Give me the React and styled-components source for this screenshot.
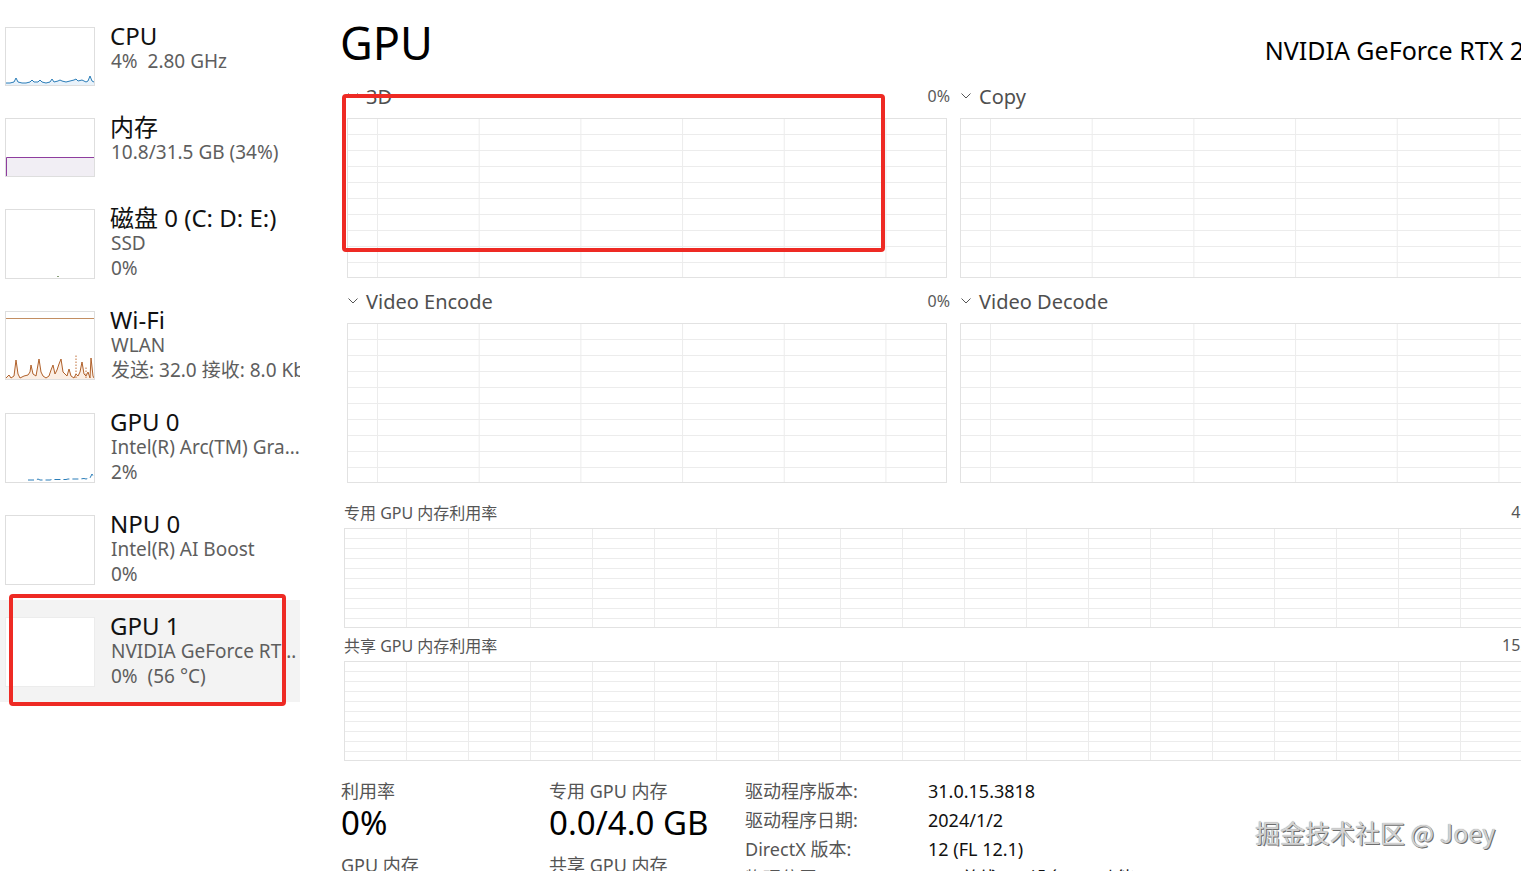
import React from "react";
import styled, { createGlobalStyle } from "styled-components";

const GlobalStyle = createGlobalStyle`
  html, body { margin: 0; padding: 0; background: #fff; overflow: hidden; }
  body { font-family: "Noto Sans", "Noto Sans CJK SC", sans-serif; color: #111; }
  * { box-sizing: border-box; }
`;

const Page = styled.div`
  position: relative;
  display: flex;
  width: 1521px;
  height: 871px;
  overflow: hidden;
  background: #fff;
`;

/* ---------- Sidebar ---------- */
const Sidebar = styled.nav`
  flex: 0 0 300px;
  width: 300px;
  min-width: 0;
  overflow: hidden;
  display: flex;
  flex-direction: column;
  padding-top: 10px;
`;

const Item = styled.div`
  display: flex;
  align-items: flex-start;
  width: 300px;
  padding: 12px 0 13px 5px;
  background: ${(p) => (p.$selected ? "#f3f3f3" : "transparent")};
`;

const Thumb = styled.div`
  flex: 0 0 90px;
  height: ${(p) => p.$h}px;
  margin: 5px 0 2px;
  border: 1px solid ${(p) => (p.$selected ? "#ececec" : "#dedede")};
  background: #fff;
  overflow: hidden;
  svg { display: block; width: 100%; height: 100%; }
`;

const ItemText = styled.div`
  flex: 1;
  min-width: 0;
  margin-left: 15px;
  overflow: hidden;
`;

const ItemTitle = styled.div`
  font-size: 24px;
  line-height: 27px;
  color: #111;
  white-space: nowrap;
`;

const ItemSub = styled.div`
  font-size: 19px;
  line-height: 25px;
  color: #5e5e5e;
  white-space: nowrap;
  overflow: hidden;
  text-overflow: ${(p) => (p.$clip ? "clip" : "ellipsis")};
  padding-left: 1px;
`;

/* ---------- Main ---------- */
const Main = styled.main`
  flex: 0 0 1267px;
  min-width: 1267px;
  padding: 20px 0 0 40px;
`;

const Header = styled.header`
  display: flex;
  align-items: baseline;
  justify-content: space-between;
`;

const Title = styled.h1`
  margin: 0;
  font-size: 45px;
  line-height: 45px;
  font-weight: 400;
  color: #000;
`;

const DeviceName = styled.div`
  font-size: 25px;
  line-height: 30px;
  color: #000;
  white-space: nowrap;
`;

const EngineGrid = styled.section`
  display: grid;
  grid-template-columns: 600px 600px;
  column-gap: 13px;
  row-gap: 5px;
  margin: 13px 0 0 7px;
`;

const EngineCell = styled.div`
  display: flex;
  flex-direction: column;
`;

const EngineHead = styled.div`
  display: flex;
  align-items: center;
  height: 36px;
  margin-bottom: 4px;
`;

const ChevronIcon = styled.svg`
  width: 10px;
  height: 6px;
  margin: 0 8px 0 1px;
  flex: none;
`;

const EngineName = styled.span`
  font-size: 20px;
  color: #4f4f4f;
`;

const EnginePct = styled.span`
  margin-left: auto;
  margin-right: -3px;
  font-size: 16px;
  color: #5a5a5a;
`;

const Graph = styled.div`
  height: ${(p) => p.$h}px;
  border: 1px solid #e2e2e2;
  background-color: #fff;
  background-image: linear-gradient(to right, #ececec 1px, transparent 1px),
    linear-gradient(to bottom, #ececec 1px, transparent 1px);
  background-size: ${(p) => p.$cw}px 100%, 100% ${(p) => p.$rh}px;
  background-position: ${(p) => p.$ox}px 0, 0 -1px;
`;

const MemSection = styled.section`
  width: 1216px;
  margin: 15px 0 0 4px;
`;

const MemBlock = styled.div`
  & + & { margin-top: 3px; }
`;

const MemHead = styled.div`
  display: flex;
  align-items: center;
  justify-content: space-between;
  height: 28px;
  margin-bottom: 2px;
  font-size: 16px;
  color: #555;
`;

const Stats = styled.section`
  display: flex;
  margin: 16px 0 0 1px;
`;

const StatCol = styled.div`
  flex: 0 0 ${(p) => p.$w}px;
`;

const StatLabel = styled.div`
  font-size: 18px;
  line-height: 28px;
  color: #555;
  white-space: nowrap;
`;

const StatValue = styled.div`
  font-size: 33px;
  line-height: 36px;
  color: #000;
  margin-bottom: 10px;
  white-space: nowrap;
`;

const InfoGrid = styled.div`
  display: grid;
  grid-template-columns: 183px auto;
  font-size: 18px;
  line-height: 29px;
  white-space: nowrap;
`;

const InfoKey = styled.div`
  color: #555;
`;

const InfoVal = styled.div`
  color: #111;
`;

/* ---------- Overlays ---------- */
const Annotation = styled.div`
  position: absolute;
  left: ${(p) => p.$x}px;
  top: ${(p) => p.$y}px;
  width: ${(p) => p.$w}px;
  height: ${(p) => p.$h}px;
  border: 4px solid #ee2a24;
  border-radius: 4px;
  pointer-events: none;
`;

const Watermark = styled.div`
  position: absolute;
  left: 1255px;
  top: 814px;
  font-family: "Noto Sans CJK SC", "Noto Sans", sans-serif;
  font-size: 25px;
  line-height: 36px;
  color: #d2d2d2;
  text-shadow: 1px 1px 0 #6d6d6d, 0 0 1px #8a8a8a;
  white-space: nowrap;
`;

/* ---------- Drawings ---------- */
const Chevron = () => (
  <ChevronIcon viewBox="0 0 10 6">
    <polyline points="0.5,0.5 5,5 9.5,0.5" fill="none" stroke="#555" strokeWidth="1" />
  </ChevronIcon>
);

const CpuSpark = () => {
  const pts =
    "0,55 4,55 8,54 10,50 12,54 16,55 20,55 24,54 26,52 28,54 32,54 34,52 36,54 40,55 44,54 46,51 48,54 52,53 54,52 56,53 60,54 64,53 68,52 70,51 72,53 76,52 80,54 82,53 84,48 86,53 88,54";
  return (
    <svg viewBox="0 0 88 57" preserveAspectRatio="none">
      <polygon points={`0,57 ${pts} 88,57`} fill="#e9f2fa" />
      <polyline points={pts} fill="none" stroke="#2a7db8" strokeWidth="1" />
    </svg>
  );
};

const MemSpark = () => (
  <svg viewBox="0 0 88 57" preserveAspectRatio="none">
    <rect x="0" y="38" width="88" height="19" fill="#f1eef4" />
    <polyline points="0.5,57 0.5,38.5 88,38.5" fill="none" stroke="#8e3d9e" strokeWidth="1" />
  </svg>
);

const DiskSpark = () => (
  <svg viewBox="0 0 88 68" preserveAspectRatio="none">
    <rect x="51" y="66" width="2" height="1" fill="#8aa07a" />
  </svg>
);

const WifiSpark = () => {
  const pts =
    "0,66 3,63 5,66 8,64 10,48 12,62 14,66 18,64 22,63 24,60 25,53 27,62 30,64 33,47 35,60 37,64 40,66 43,64 45,58 47,53 49,62 51,58 53,52 55,47 57,60 59,62 61,64 63,57 65,64 68,66 70,62 72,64 74,60 76,50 78,62 80,64 82,60 84,66 85,46 87,64 88,66";
  return (
    <svg viewBox="0 0 88 67" preserveAspectRatio="none">
      <line x1="0" y1="6.5" x2="88" y2="6.5" stroke="#c38e62" strokeWidth="1" />
      <polygon points={`0,67 ${pts} 88,67`} fill="#fbeee4" />
      <polyline points={pts} fill="none" stroke="#b0612b" strokeWidth="1" />
      <line x1="70" y1="66" x2="70" y2="43" stroke="#c0703a" strokeWidth="1" strokeDasharray="1.5 1.5" />
      <line x1="80" y1="66" x2="80" y2="54" stroke="#c0703a" strokeWidth="1" strokeDasharray="1.5 1.5" />
    </svg>
  );
};

const Gpu0Spark = () => (
  <svg viewBox="0 0 88 68" preserveAspectRatio="none">
    <polyline
      points="22,66 30,66 32,65 34,66 44,66 46,65.5 60,65.5 62,65 74,65 78,64.5 80,65 84,64 86,60 88,64"
      fill="none"
      stroke="#2a7db8"
      strokeWidth="1"
      strokeDasharray="6 3"
    />
  </svg>
);

/* ---------- Data ---------- */
const items = [
  { title: "CPU", subs: ["4%\u00a0 2.80 GHz"], h: 59, chart: <CpuSpark /> },
  { title: "内存", subs: ["10.8/31.5 GB (34%)"], h: 59, chart: <MemSpark /> },
  { title: "磁盘 0 (C: D: E:)", subs: ["SSD", "0%"], h: 70, chart: <DiskSpark /> },
  { title: "Wi-Fi", subs: ["WLAN", "发送: 32.0  接收: 8.0 Kbps"], h: 69, chart: <WifiSpark />, clip: true },
  { title: "GPU 0", subs: ["Intel(R) Arc(TM) Graphics", "2%"], h: 70, chart: <Gpu0Spark /> },
  { title: "NPU 0", subs: ["Intel(R) AI Boost", "0%"], h: 70 },
  { title: "GPU 1", subs: ["NVIDIA GeForce RTX 2050", "0%\u00a0 (56 °C)"], h: 70, selected: true },
];

const engines = [
  { name: "3D", pct: "0%" },
  { name: "Copy", pct: "0%" },
  { name: "Video Encode", pct: "0%" },
  { name: "Video Decode", pct: "0%" },
];

const info = [
  ["驱动程序版本:", "31.0.15.3818"],
  ["驱动程序日期:", "2024/1/2"],
  ["DirectX 版本:", "12 (FL 12.1)"],
  ["物理位置:", "PCI 总线 1、设备 0、功能 0"],
];

export default function App() {
  return (
    <Page>
      <GlobalStyle />
      <Sidebar>
        {items.map((it) => (
          <Item key={it.title} $selected={it.selected}>
            <Thumb $h={it.h} $selected={it.selected}>{it.chart}</Thumb>
            <ItemText>
              <ItemTitle>{it.title}</ItemTitle>
              {it.subs.map((s) => (
                <ItemSub key={s} $clip={it.clip}>{s}</ItemSub>
              ))}
            </ItemText>
          </Item>
        ))}
      </Sidebar>

      <Main>
        <Header>
          <Title>GPU</Title>
          <DeviceName>NVIDIA GeForce RTX 2050</DeviceName>
        </Header>

        <EngineGrid>
          {engines.map((e) => (
            <EngineCell key={e.name}>
              <EngineHead>
                <Chevron />
                <EngineName>{e.name}</EngineName>
                <EnginePct>{e.pct}</EnginePct>
              </EngineHead>
              <Graph $h={160} $cw={101.7} $rh={16} $ox={29} />
            </EngineCell>
          ))}
        </EngineGrid>

        <MemSection>
          <MemBlock>
            <MemHead>
              <span>专用 GPU 内存利用率</span>
              <span>4.0 GB</span>
            </MemHead>
            <Graph $h={100} $cw={62} $rh={10} $ox={-1} />
          </MemBlock>
          <MemBlock>
            <MemHead>
              <span>共享 GPU 内存利用率</span>
              <span>15.8 GB</span>
            </MemHead>
            <Graph $h={100} $cw={62} $rh={10} $ox={-1} />
          </MemBlock>
        </MemSection>

        <Stats>
          <StatCol $w={208}>
            <StatLabel>利用率</StatLabel>
            <StatValue>0%</StatValue>
            <StatLabel>GPU 内存</StatLabel>
          </StatCol>
          <StatCol $w={196}>
            <StatLabel>专用 GPU 内存</StatLabel>
            <StatValue>0.0/4.0 GB</StatValue>
            <StatLabel>共享 GPU 内存</StatLabel>
          </StatCol>
          <StatCol $w={500}>
            <InfoGrid>
              {info.map(([k, v]) => (
                <React.Fragment key={k}>
                  <InfoKey>{k}</InfoKey>
                  <InfoVal>{v}</InfoVal>
                </React.Fragment>
              ))}
            </InfoGrid>
          </StatCol>
        </Stats>
      </Main>

      <Annotation $x={342} $y={94} $w={543} $h={158} />
      <Annotation $x={9} $y={594} $w={277} $h={112} />
      <Watermark>掘金技术社区 @ Joey</Watermark>
    </Page>
  );
}
